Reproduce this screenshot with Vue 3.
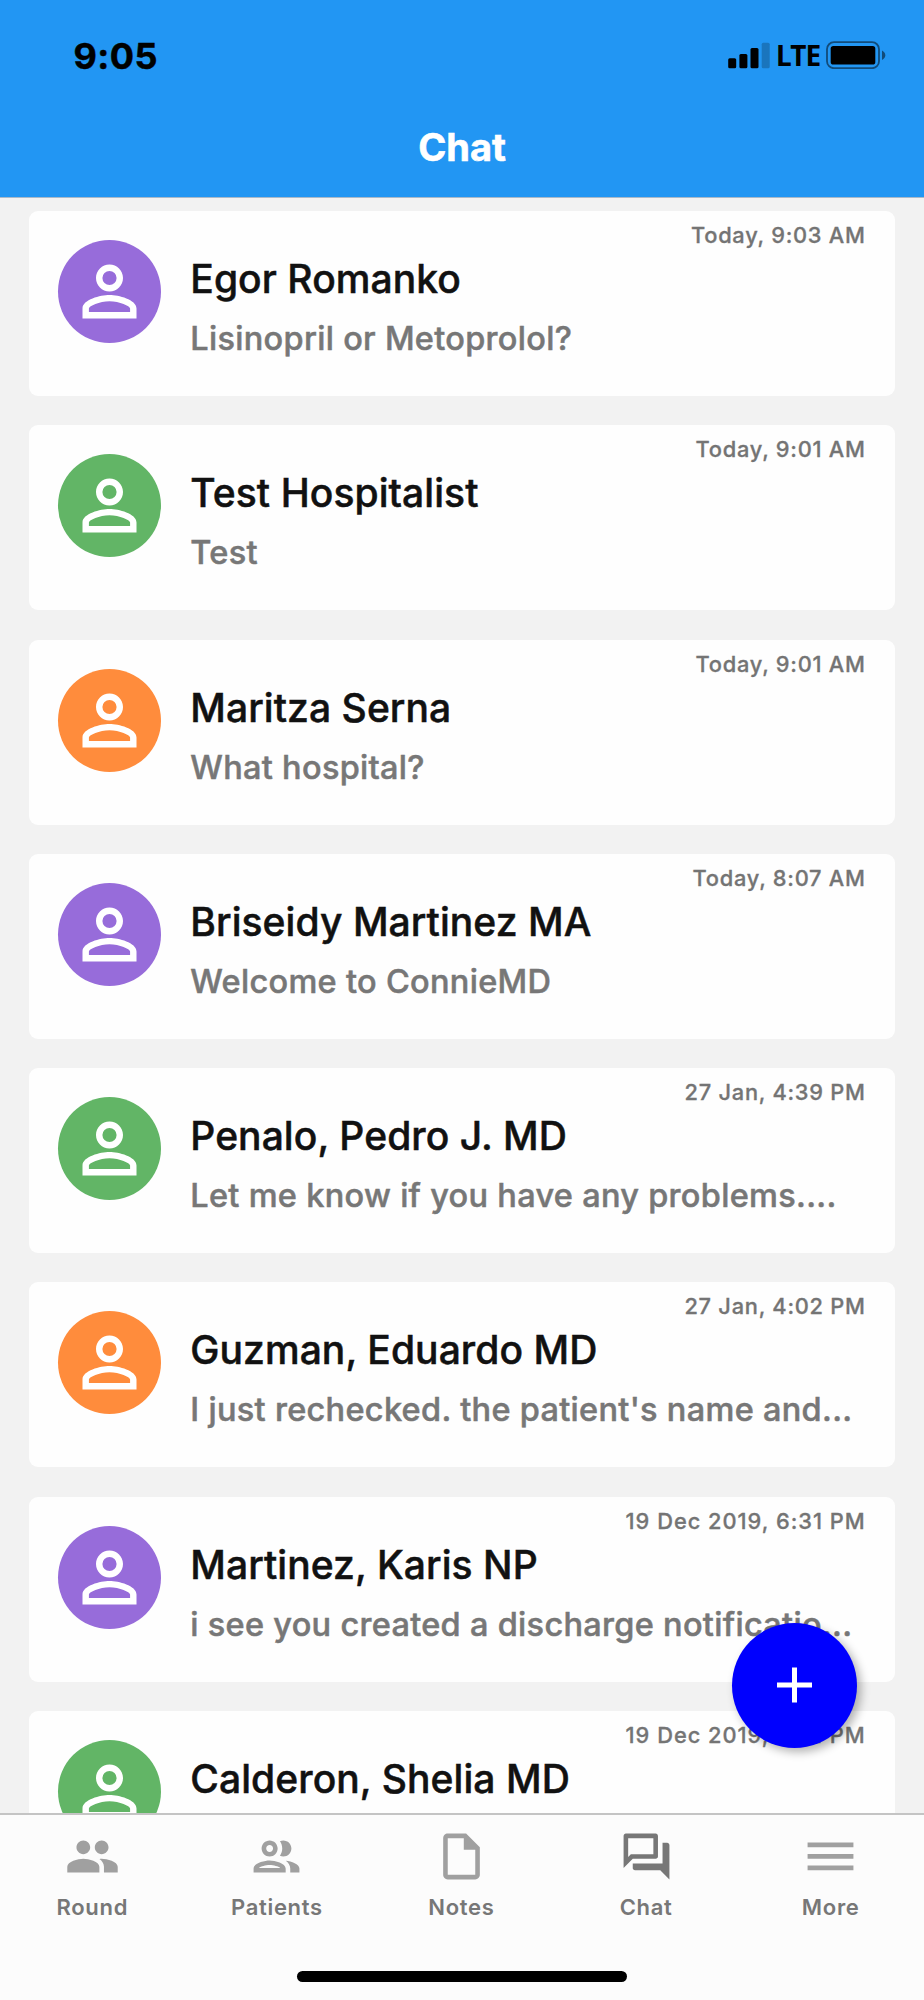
<script setup>
const PURPLE = '#976cda'
const GREEN = '#62b566'
const ORANGE = '#ff8c3c'

const chats = [
  { name: 'Egor Romanko', message: 'Lisinopril or Metoprolol?', time: 'Today, 9:03 AM', color: PURPLE },
  { name: 'Test Hospitalist', message: 'Test', time: 'Today, 9:01 AM', color: GREEN },
  { name: 'Maritza Serna', message: 'What hospital?', time: 'Today, 9:01 AM', color: ORANGE },
  { name: 'Briseidy Martinez MA', message: 'Welcome to ConnieMD', time: 'Today, 8:07 AM', color: PURPLE },
  { name: 'Penalo, Pedro J. MD', message: 'Let me know if you have any problems....', time: '27 Jan, 4:39 PM', color: GREEN },
  { name: 'Guzman, Eduardo MD', message: "I just rechecked. the patient's name and...", time: '27 Jan, 4:02 PM', color: ORANGE },
  { name: 'Martinez, Karis NP', message: 'i see you created a discharge notificatio...', time: '19 Dec 2019, 6:31 PM', dated: true, color: PURPLE },
  { name: 'Calderon, Shelia MD', message: '', time: '19 Dec 2019, 6:31 PM', dated: true, color: GREEN },
]

const tabs = [
  { label: 'Round', icon: 'M16 11c1.66 0 2.99-1.34 2.99-3S17.66 5 16 5s-3 1.34-3 3 1.34 3 3 3zm-8 0c1.66 0 2.99-1.34 2.99-3S9.66 5 8 5 5 6.34 5 8s1.34 3 3 3zm0 2c-2.33 0-7 1.17-7 3.5V19h14v-2.5c0-2.33-4.67-3.5-7-3.5zm8 0c-.29 0-.62.02-.97.05 1.16.84 1.97 1.97 1.97 3.45V19h6v-2.5c0-2.33-4.67-3.5-7-3.5z' },
  { label: 'Patients', icon: 'M9 13.75c-2.34 0-7 1.17-7 3.5V19h14v-1.75c0-2.33-4.66-3.5-7-3.5zM4.34 17c.84-.58 2.87-1.25 4.66-1.25s3.82.67 4.66 1.25H4.34zM9 12c1.93 0 3.5-1.57 3.5-3.5S10.93 5 9 5 5.5 6.57 5.5 8.5 7.07 12 9 12zm0-5c.83 0 1.5.67 1.5 1.5S9.83 10 9 10s-1.5-.67-1.5-1.5S8.17 7 9 7zm7.04 6.81c1.16.84 1.96 1.96 1.96 3.44V19h4v-1.75c0-2.02-3.5-3.17-5.96-3.44zM15 12c1.93 0 3.5-1.57 3.5-3.5S16.93 5 15 5c-.54 0-1.04.13-1.5.35.63.89 1 1.98 1 3.15s-.37 2.26-1 3.15c.46.22.96.35 1.5.35z' },
  { label: 'Notes', icon: 'M6 2c-1.1 0-1.99.9-1.99 2L4 20c0 1.1.89 2 1.99 2H18c1.1 0 2-.9 2-2V8l-6-6H6zm0 18V4h7v5h5v11H6z' },
  { label: 'Chat', active: true, icon: 'M15 4v7H5.17L4 12.17V4h11m1-2H3c-.55 0-1 .45-1 1v14l4-4h10c.55 0 1-.45 1-1V3c0-.55-.45-1-1-1zm5 4h-2v9H6v2c0 .55.45 1 1 1h11l4 4V7c0-.55-.45-1-1-1z' },
  { label: 'More', icon: 'M2 5.9h20v2.1H2zm0 5h20v2.1H2zm0 5h20v2.1H2z' },
]
</script>

<template>
  <div class="phone">
    <header class="header">
      <div class="status">
        <span class="clock">9:05</span>
        <div class="indicators">
          <svg class="signal" width="42" height="28" viewBox="0 0 42 28">
            <rect x="0.2" y="17.3" width="8" height="10" rx="1.5" />
            <rect x="11.400" y="13" width="8" height="14.3" rx="1.5" />
            <rect x="22.500" y="7" width="8" height="20.3" rx="1.5" />
            <rect x="33.700" y="1.8" width="8" height="25.5" rx="1.5" opacity="0.22" />
          </svg>
          <span class="network">LTE</span>
          <svg class="battery" width="60" height="28" viewBox="0 0 60 28">
            <rect x="1" y="1.2" width="52" height="26" rx="7" fill="none" stroke="#000" stroke-opacity="0.5" stroke-width="1.8" />
            <rect x="4.700" y="5" width="44.6" height="18.6" rx="2.6" />
            <path d="M56 9.600c2 1 3.300 2.800 3.300 4.700s-1.300 3.700-3.300 4.700z" opacity="0.5" />
          </svg>
        </div>
      </div>
      <h1 class="title">Chat</h1>
    </header>

    <main class="list">
      <article v-for="chat in chats" :key="chat.name" class="card">
        <div class="avatar" :style="{ background: chat.color }">
          <svg width="81" height="81" viewBox="0 0 24 24" fill="#fff">
            <path d="M12 5.900a2.100 2.100 0 1 1 0 4.200 2.100 2.100 0 0 1 0-4.200m0 9c2.970 0 6.100 1.460 6.100 2.100v1.100H5.900V17c0-.64 3.130-2.100 6.100-2.100M12 4C9.790 4 8 5.790 8 8s1.790 4 4 4 4-1.790 4-4-1.790-4-4-4zm0 9c-2.670 0-8 1.340-8 4v3h16v-3c0-2.660-5.330-4-8-4z" />
          </svg>
        </div>
        <div class="body">
          <time class="time" :class="{ dated: chat.dated }">{{ chat.time }}</time>
          <h2 class="name">{{ chat.name }}</h2>
          <p class="message">{{ chat.message }}</p>
        </div>
      </article>
    </main>

    <button class="fab" aria-label="New chat">
      <svg width="36" height="36" viewBox="0 0 36 36">
        <path d="M15 .5h5v15h15v5h-15v15h-5v-15h-15v-5h15z" fill="#fff" />
      </svg>
    </button>

    <nav class="tabs">
      <a v-for="tab in tabs" :key="tab.label" class="tab" :class="{ active: tab.active }">
        <svg width="55" height="55" viewBox="0 0 24 24" fill="currentColor"><path :d="tab.icon" /></svg>
        <span class="label">{{ tab.label }}</span>
      </a>
      <div class="home"></div>
    </nav>
  </div>
</template>

<style>
body {
  margin: 0;
}
</style>

<style scoped>
.phone {
  position: relative;
  display: flex;
  flex-direction: column;
  width: 924px;
  height: 2000px;
  overflow: hidden;
  background: #f2f2f2;
  font-family: Inter, "Liberation Sans", sans-serif;
}
.header {
  flex: none;
  box-sizing: border-box;
  height: 198px;
  background: #2296f3;
  border-bottom: 1px solid #a9b9c9;
}
.status {
  display: flex;
  justify-content: space-between;
  height: 110px;
  padding: 0 38px 0 73.500px;
}
.clock {
  margin-top: 36px;
  font-size: 36px;
  line-height: 40px;
  letter-spacing: 0.4px;
  font-weight: 700;
  -webkit-text-stroke: 0.5px #000;
}
.indicators {
  display: flex;
  align-items: flex-start;
  padding-top: 41px;
}
.network {
  width: 43px;
  margin: -1px 7px 0 6px;
  font-family: "Noto Sans", sans-serif;
  font-size: 28px;
  line-height: 30px;
  letter-spacing: -0.9px;
  font-weight: 700;
}
.title {
  margin: 14px 0 0;
  text-align: center;
  font-size: 38px;
  line-height: 46px;
  font-weight: 700;
  color: #fff;
  -webkit-text-stroke: 0.6px #fff;
}
.list {
  flex: 1;
  min-height: 0;
  display: flex;
  flex-direction: column;
  gap: 29.250px;
  padding: 13px 29.300px 0;
  overflow: hidden;
}
.card {
  flex: none;
  display: flex;
  box-sizing: border-box;
  height: 185px;
  padding: 0 29px;
  border-radius: 9px;
  background: #fefefe;
}
.avatar {
  flex: none;
  display: flex;
  align-items: center;
  justify-content: center;
  width: 103px;
  height: 103px;
  margin-top: 29px;
  border-radius: 50%;
}
.body {
  flex: 1;
  min-width: 0;
  display: flex;
  flex-direction: column;
  padding-left: 29px;
}
.time {
  align-self: flex-end;
  margin-top: 9px;
  font-size: 21.800px;
  line-height: 30px;
  letter-spacing: 0.75px;
  font-weight: 500;
  color: #747474;
  -webkit-text-stroke: 0.3px #747474;
}
.time.dated {
  letter-spacing: 1px;
}
.name {
  margin: 4px 0 0;
  font-size: 39px;
  line-height: 50px;
  letter-spacing: 0.07px;
  font-weight: 500;
  white-space: nowrap;
  color: #111;
  -webkit-text-stroke: 0.5px #111;
}
.message {
  margin: 13px 0 0;
  font-size: 32.500px;
  line-height: 44px;
  letter-spacing: 0.300px;
  font-weight: 500;
  white-space: nowrap;
  color: #777;
  -webkit-text-stroke: 0.5px #777;
}
.fab {
  position: absolute;
  left: 732px;
  top: 1622.500px;
  display: flex;
  align-items: center;
  justify-content: center;
  width: 125px;
  height: 125px;
  padding: 0;
  border: 0;
  border-radius: 50%;
  background: #0000fe;
  box-shadow: 4px 4px 10px rgba(0, 0, 0, 0.3);
}
.tabs {
  position: relative;
  flex: none;
  display: flex;
  box-sizing: border-box;
  height: 187px;
  padding-right: 1px;
  border-top: 2px solid #c4c4c4;
  background: #fcfcfc;
}
.tab {
  flex: 1;
  display: flex;
  flex-direction: column;
  align-items: center;
  padding-top: 14px;
  color: #a0a0a0;
}
.tab.active {
  color: #777;
}
.label {
  margin-top: 8px;
  font-size: 22px;
  line-height: 30px;
  letter-spacing: 0.7px;
  font-weight: 600;
  color: #777;
}
.home {
  position: absolute;
  left: 297px;
  bottom: 18px;
  width: 330px;
  height: 11px;
  border-radius: 6px;
  background: #000;
}
</style>
